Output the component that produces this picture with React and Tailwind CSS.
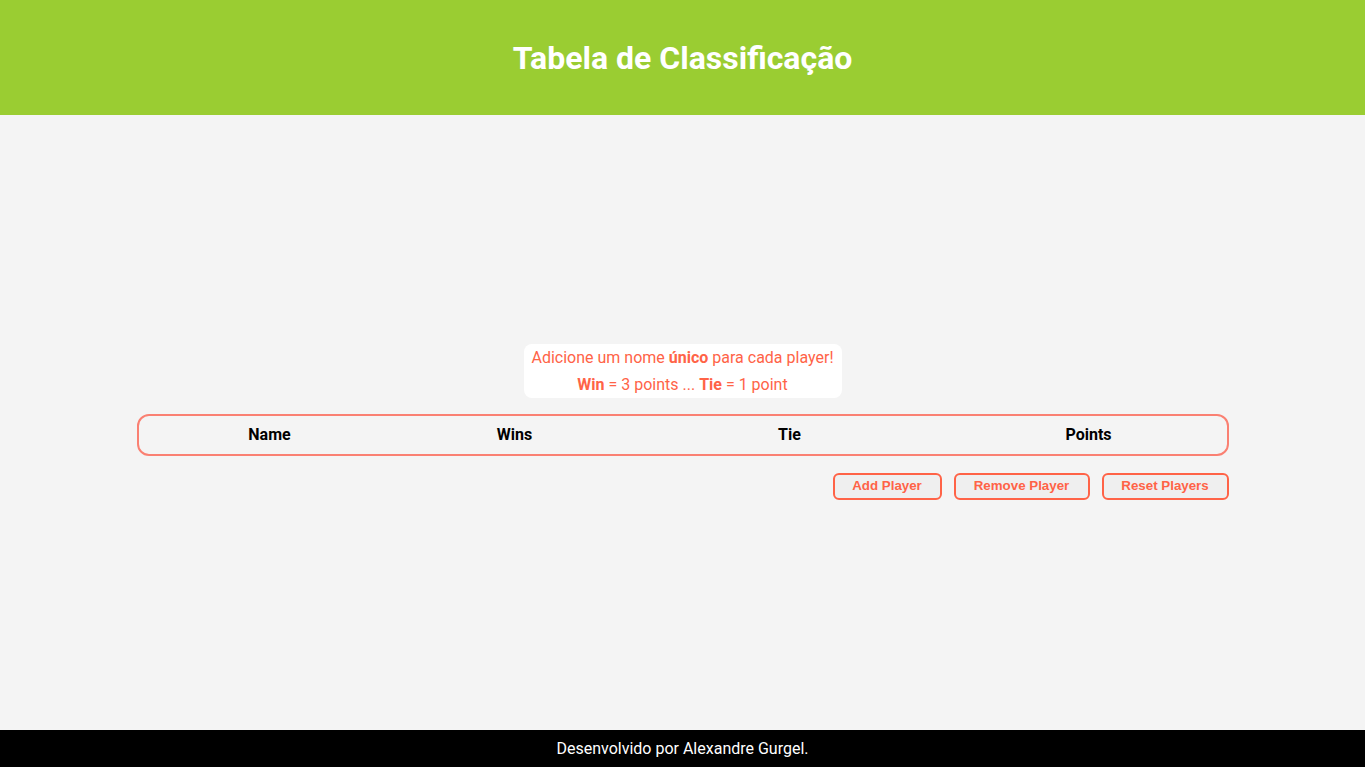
export default function App() {
  return (
    <div className="flex min-h-[767px] flex-col bg-[#f4f4f4] font-['Roboto',sans-serif]">
      <header className="flex h-[115px] items-center justify-center bg-[#9acd32]">
        <h1 className="text-[32px] font-bold leading-none text-white">Tabela de Classificação</h1>
      </header>
      <main className="flex flex-1 flex-col items-center justify-center pb-[2px]">
        <div className="rounded-lg bg-white px-2 text-center text-[16px] leading-[27px] text-[#ff6347]">
          <p>
            Adicione um nome <b>único</b> para cada player!
          </p>
          <p>
            <b>Win</b> = 3 points ... <b>Tie</b> = 1 point
          </p>
        </div>
        <div className="mt-4 grid h-[42px] w-[1092px] grid-cols-[262px_228px_322px_1fr] items-center rounded-xl border-2 border-[#fa8072] text-center text-[16px] font-bold text-black">
          <div>Name</div>
          <div>Wins</div>
          <div>Tie</div>
          <div>Points</div>
        </div>
        <div className="mt-[17px] flex w-[1092px] justify-end gap-3 font-['Liberation_Sans',Arial,sans-serif]">
          <button className="h-[27px] w-[109px] rounded-md border-2 border-[#ff6347] bg-[#efefef] text-[13.33px] font-bold text-[#ff6347]">
            Add Player
          </button>
          <button className="h-[27px] w-[136px] rounded-md border-2 border-[#ff6347] bg-[#efefef] text-[13.33px] font-bold text-[#ff6347]">
            Remove Player
          </button>
          <button className="h-[27px] w-[127px] rounded-md border-2 border-[#ff6347] bg-[#efefef] text-[13.33px] font-bold text-[#ff6347]">
            Reset Players
          </button>
        </div>
      </main>
      <footer className="flex h-[37px] items-center justify-center bg-black text-[16px] text-white">
        Desenvolvido por Alexandre Gurgel.
      </footer>
    </div>
  );
}
